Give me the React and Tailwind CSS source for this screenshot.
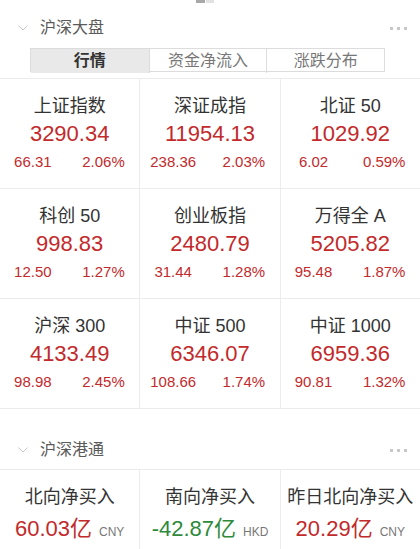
import React from 'react';

const indices = [
  { name: '上证指数', value: '3290.34', change: '66.31', pct: '2.06%' },
  { name: '深证成指', value: '11954.13', change: '238.36', pct: '2.03%' },
  { name: '北证 50', value: '1029.92', change: '6.02', pct: '0.59%' },
  { name: '科创 50', value: '998.83', change: '12.50', pct: '1.27%' },
  { name: '创业板指', value: '2480.79', change: '31.44', pct: '1.28%' },
  { name: '万得全 A', value: '5205.82', change: '95.48', pct: '1.87%' },
  { name: '沪深 300', value: '4133.49', change: '98.98', pct: '2.45%' },
  { name: '中证 500', value: '6346.07', change: '108.66', pct: '1.74%' },
  { name: '中证 1000', value: '6959.36', change: '90.81', pct: '1.32%' },
];

const flows = [
  { name: '北向净买入', value: '60.03亿', unit: 'CNY', up: true },
  { name: '南向净买入', value: '-42.87亿', unit: 'HKD', up: false },
  { name: '昨日北向净买入', value: '20.29亿', unit: 'CNY', up: true },
];

const Chevron = () => (
  <svg width="10" height="6" viewBox="0 0 10 6" className="shrink-0">
    <polyline points="0.5,0.5 5,5 9.5,0.5" fill="none" stroke="#c8c8c8" strokeWidth="1" />
  </svg>
);

const Dots = () => (
  <div className="flex items-center gap-[4px]">
    <span className="w-[3px] h-[3px] bg-[#c8c8c8]" />
    <span className="w-[3px] h-[3px] bg-[#c8c8c8]" />
    <span className="w-[3px] h-[3px] bg-[#c8c8c8]" />
  </div>
);

const SectionHeader = ({ title, className }) => (
  <div className={`flex items-center pl-[18px] pr-[13px] ${className}`}>
    <Chevron />
    <span className="ml-[12px] text-[16px] text-[#5a5a5a] leading-none">{title}</span>
    <div className="ml-auto">
      <Dots />
    </div>
  </div>
);

export default function App() {
  return (
    <div
      className="w-[420px] h-[549px] bg-white overflow-hidden"
      style={{ fontFamily: '"Liberation Sans", "Noto Sans CJK SC", sans-serif' }}
    >
      {/* page indicator */}
      <div className="h-[10px] flex justify-center pr-[10px]">
        <span className="w-[9px] h-[3px] bg-[#a8a8a8]" />
        <span className="w-[8px] h-[3px] bg-[#e2e2e2] ml-[1px]" />
      </div>

      <SectionHeader title="沪深大盘" className="h-[36px]" />

      {/* tabs */}
      <div className="mt-[2px] ml-[30px] w-[355px] h-[24px] grid grid-cols-3 border border-[#dcdcdc] text-[16px]">
        <div className="bg-[#e9e9e9] flex items-center justify-center font-bold text-[#333]">行情</div>
        <div className="flex items-center justify-center text-[#777] border-l border-[#dcdcdc]">资金净流入</div>
        <div className="flex items-center justify-center text-[#777] border-l border-[#dcdcdc]">涨跌分布</div>
      </div>

      {/* index grid */}
      <div className="mt-[6px] border-t border-b border-[#ececec] bg-[#ececec] grid grid-cols-3 gap-px">
        {indices.map((it) => (
          <div key={it.name} className="bg-white h-[109px] pt-[15px] text-center">
            <div className="text-[18px] leading-[24px] text-[#333]">{it.name}</div>
            <div className="mt-[2px] text-[22px] leading-[28px] text-[#c22a2c]">{it.value}</div>
            <div className="mt-[4px] grid grid-cols-2 text-[15px] leading-[20px] text-[#c22a2c]">
              <span className="pr-[4px]">{it.change}</span>
              <span className="pr-[2px]">{it.pct}</span>
            </div>
          </div>
        ))}
      </div>

      <SectionHeader title="沪深港通" className="h-[60px] pt-[22px]" />

      {/* flows */}
      <div className="border-t border-[#ececec] bg-[#ececec] grid grid-cols-3 gap-px">
        {flows.map((f) => (
          <div key={f.name} className="bg-white h-[80px] pt-[15px] text-center">
            <div className="text-[18px] leading-[24px] text-[#333] whitespace-nowrap">{f.name}</div>
            <div className="mt-[6px] leading-[28px] whitespace-nowrap">
              <span className={`text-[22px] ${f.up ? 'text-[#c22a2c]' : 'text-[#2f8a3c]'}`}>{f.value}</span>
              <span className="ml-[7px] text-[12px] text-[#777]">{f.unit}</span>
            </div>
          </div>
        ))}
      </div>
    </div>
  );
}
